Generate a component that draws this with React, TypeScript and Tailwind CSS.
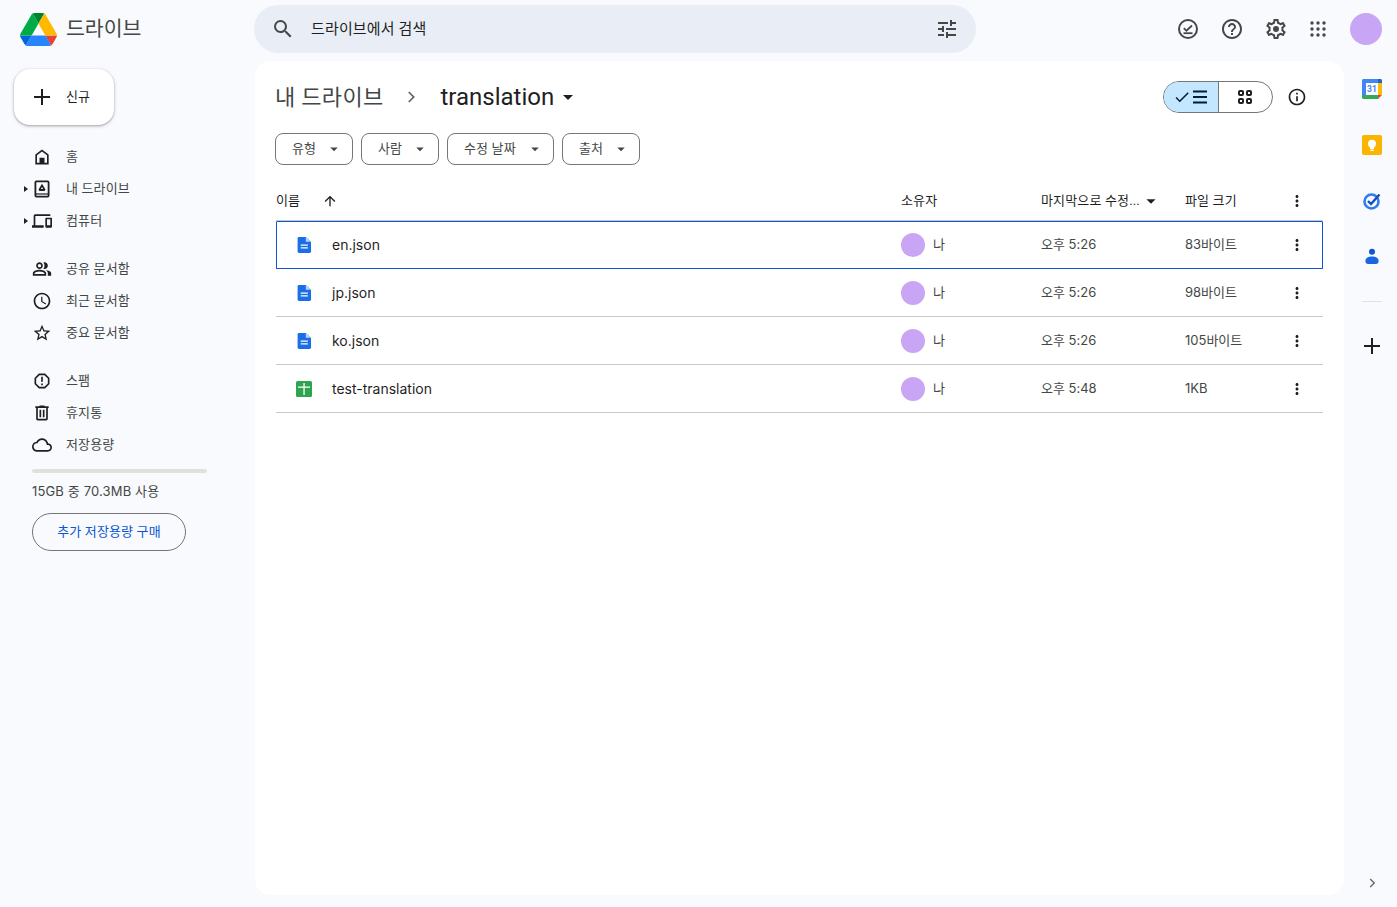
import type { ReactNode } from "react";

const FONT = "font-['Roboto','Noto_Sans_CJK_KR',sans-serif]";

function Icon({ d, size = 24, className = "", children }: { d?: string; size?: number; className?: string; children?: ReactNode }) {
  return (
    <svg width={size} height={size} viewBox="0 0 24 24" fill="currentColor" className={`shrink-0 ${className}`}>
      {d && <path d={d} />}
      {children}
    </svg>
  );
}

const PATHS = {
  search: "M15.5 14h-.79l-.28-.27A6.471 6.471 0 0 0 16 9.5 6.5 6.5 0 1 0 9.5 16c1.61 0 3.09-.59 4.23-1.57l.27.28v.79l5 4.99L20.49 19l-4.99-5zm-6 0C7.01 14 5 11.99 5 9.5S7.01 5 9.5 5 14 7.01 14 9.5 11.99 14 9.5 14z",
  tune: "M3 17v2h6v-2H3zM3 5v2h10V5H3zm10 16v-2h8v-2h-8v-2h-2v6h2zM7 9v2H3v2h4v2h2V9H7zm14 4v-2H11v2h10zm-6-4h2V7h4V5h-4V3h-2v6z",
  help: "M11 18h2v-2h-2v2zm1-16C6.48 2 2 6.48 2 12s4.48 10 10 10 10-4.48 10-10S17.52 2 12 2zm0 18c-4.41 0-8-3.59-8-8s3.59-8 8-8 8 3.59 8 8-3.59 8-8 8zm0-14c-2.21 0-4 1.79-4 4h2c0-1.1.9-2 2-2s2 .9 2 2c0 2-3 1.75-3 5h2c0-2.25 3-2.5 3-5 0-2.21-1.79-4-4-4z",
  settings: "M19.43 12.98c.04-.32.07-.64.07-.98 0-.34-.03-.66-.07-.98l2.11-1.65c.19-.15.24-.42.12-.64l-2-3.46c-.09-.16-.26-.25-.44-.25-.06 0-.12.01-.17.03l-2.49 1c-.52-.4-1.08-.73-1.69-.98l-.38-2.65C14.46 2.18 14.25 2 14 2h-4c-.25 0-.46.18-.49.42l-.38 2.65c-.61.25-1.17.59-1.69.98l-2.49-1c-.06-.02-.12-.03-.18-.03-.17 0-.34.09-.43.25l-2 3.46c-.13.22-.07.49.12.64l2.11 1.65c-.04.32-.07.65-.07.98 0 .33.03.66.07.98l-2.11 1.65c-.19.15-.24.42-.12.64l2 3.46c.09.16.26.25.44.25.06 0 .12-.01.17-.03l2.49-1c.52.4 1.08.73 1.69.98l.38 2.65c.03.24.24.42.49.42h4c.25 0 .46-.18.49-.42l.38-2.65c.61-.25 1.17-.59 1.69-.98l2.49 1c.06.02.12.03.18.03.17 0 .34-.09.43-.25l2-3.46c.12-.22.07-.49-.12-.64l-2.11-1.65zm-1.98-1.71c.04.31.05.52.05.73 0 .21-.02.43-.05.73l-.14 1.13.89.7 1.08.84-.7 1.21-1.27-.51-1.04-.42-.9.68c-.43.32-.84.56-1.25.73l-1.06.43-.16 1.13-.2 1.35h-1.4l-.19-1.35-.16-1.13-1.06-.43c-.43-.18-.83-.41-1.23-.71l-.91-.7-1.06.43-1.27.51-.7-1.21 1.08-.84.89-.7-.14-1.13c-.03-.31-.05-.54-.05-.74s.02-.43.05-.73l.14-1.13-.89-.7-1.08-.84.7-1.21 1.27.51 1.04.42.9-.68c.43-.32.84-.56 1.25-.73l1.06-.43.16-1.13.2-1.35h1.39l.19 1.35.16 1.13 1.06.43c.43.18.83.41 1.23.71l.91.7 1.06-.43 1.27-.51.7 1.21-1.07.85-.89.7.14 1.13zM12 9a3 3 0 1 0 0 6 3 3 0 0 0 0-6z",
  plus: "M20 13h-7v7h-2v-7H4v-2h7V4h2v7h7v2z",
  home: "M12 3L4 9v12h16V9l-8-6zm6 16h-3v-6H9v6H6v-9l6-4.5 6 4.5v9z",
  devices: "M4 6h18V4H4c-1.1 0-2 .9-2 2v11H0v3h14v-3H4V6zm19 2h-6c-.55 0-1 .45-1 1v10c0 .55.45 1 1 1h6c.55 0 1-.45 1-1V9c0-.55-.45-1-1-1zm-1 9h-4v-7h4v7z",
  people: "M16.67 13.13C18.04 14.06 19 15.32 19 17v3h4v-3c0-2.18-3.57-3.47-6.33-3.87zM15 12c2.21 0 4-1.79 4-4s-1.79-4-4-4c-.47 0-.91.1-1.33.24C14.5 5.27 15 6.58 15 8s-.5 2.73-1.33 3.76c.42.14.86.24 1.33.24zM9 12c2.21 0 4-1.79 4-4s-1.79-4-4-4-4 1.79-4 4 1.79 4 4 4zm0-6c1.1 0 2 .9 2 2s-.9 2-2 2-2-.9-2-2 .9-2 2-2zM9 13c-2.67 0-8 1.34-8 4v3h16v-3c0-2.66-5.33-4-8-4zm6 5H3v-.99C3.2 16.29 6.3 15 9 15s5.8 1.29 6 2v1z",
  clock: "M11.99 2C6.47 2 2 6.48 2 12s4.47 10 9.99 10C17.52 22 22 17.52 22 12S17.52 2 11.99 2zM12 20c-4.42 0-8-3.58-8-8s3.58-8 8-8 8 3.58 8 8-3.58 8-8 8zm.5-13H11v6l5.25 3.15.75-1.23-4.5-2.67z",
  star: "M22 9.24l-7.19-.62L12 2 9.19 8.63 2 9.24l5.46 4.73L5.82 21 12 17.27 18.18 21l-1.63-7.03L22 9.24zM12 15.4l-3.76 2.27 1-4.28-3.32-2.88 4.38-.38L12 6.1l1.71 4.04 4.38.38-3.32 2.88 1 4.28L12 15.4z",
  spam: "M15.73 3H8.27L3 8.27v7.46L8.27 21h7.46L21 15.73V8.27L15.73 3zM19 14.9L14.9 19H9.1L5 14.9V9.1L9.1 5h5.8L19 9.1v5.8zM11 7h2v6h-2zm0 8h2v2h-2z",
  trash: "M15 4V3H9v1H4v2h1v13c0 1.1.9 2 2 2h10c1.1 0 2-.9 2-2V6h1V4h-5zm2 15H7V6h10v13zM9 8h2v9H9zm4 0h2v9h-2z",
  cloud: "M19.35 10.04C18.67 6.59 15.64 4 12 4 9.11 4 6.6 5.64 5.35 8.04 2.34 8.36 0 10.91 0 14c0 3.31 2.69 6 6 6h13c2.76 0 5-2.24 5-5 0-2.64-2.05-4.78-4.65-4.96zM19 18H6c-2.21 0-4-1.79-4-4 0-2.05 1.53-3.76 3.56-3.97l1.07-.11.5-.95C8.08 7.14 9.94 6 12 6c2.62 0 4.88 1.86 5.39 4.43l.3 1.5 1.53.11c1.56.1 2.78 1.41 2.78 2.96 0 1.65-1.35 3-3 3z",
  caret: "M7 10l5 5 5-5z",
  chevron: "M8.600 6.700l1.400-1.400 6.700 6.700-6.700 6.700-1.400-1.400 5.300-5.300z",
  info: "M11 7h2v2h-2zm0 4h2v6h-2zm1-9C6.48 2 2 6.48 2 12s4.48 10 10 10 10-4.48 10-10S17.52 2 12 2zm0 18c-4.41 0-8-3.59-8-8s3.59-8 8-8 8 3.59 8 8-3.59 8-8 8z",
  up: "M4 12l1.41 1.41L11 7.83V20h2V7.83l5.58 5.59L20 12l-8-8-8 8z",
  more: "M12 8c1.1 0 2-.9 2-2s-.9-2-2-2-2 .9-2 2 .9 2 2 2zm0 2c-1.1 0-2 .9-2 2s.9 2 2 2 2-.9 2-2-.9-2-2-2zm0 6c-1.1 0-2 .9-2 2s.9 2 2 2 2-.9 2-2-.9-2-2-2z",
  check: "M9 16.17L4.83 12l-1.42 1.41L9 19 21 7l-1.41-1.41z",
};

function DriveLogo() {
  return (
    <svg width="37" height="33" viewBox="0 0 87.3 78">
      <path d="m6.6 66.85 3.85 6.65c.8 1.4 1.95 2.5 3.3 3.3l13.75-23.8h-27.5c0 1.55.4 3.1 1.2 4.5z" fill="#0066da" />
      <path d="m43.65 25-13.75-23.8c-1.35.8-2.5 1.9-3.3 3.3l-25.4 44a9.06 9.06 0 0 0 -1.2 4.5h27.5z" fill="#00ac47" />
      <path d="m73.55 76.8c1.35-.8 2.5-1.9 3.3-3.3l1.6-2.75 7.65-13.25c.8-1.4 1.2-2.95 1.2-4.5h-27.502l5.852 11.5z" fill="#ea4335" />
      <path d="m43.65 25 13.75-23.8c-1.35-.8-2.9-1.2-4.5-1.2h-18.5c-1.6 0-3.15.45-4.5 1.2z" fill="#00832d" />
      <path d="m59.8 53h-32.3l-13.75 23.8c1.35.8 2.9 1.2 4.5 1.2h50.8c1.6 0 3.15-.45 4.5-1.2z" fill="#2684fc" />
      <path d="m73.4 26.5-12.7-22c-.8-1.4-1.95-2.5-3.3-3.3l-13.75 23.8 16.15 28h27.45c0-1.55-.4-3.1-1.2-4.5z" fill="#ffba00" />
    </svg>
  );
}

function MyDriveIcon() {
  return (
    <svg width="24" height="24" viewBox="0 0 24 24" fill="none" className="shrink-0">
      <rect x="5.400" y="4.400" width="13.200" height="15.200" rx="1" stroke="currentColor" strokeWidth="1.800" />
      <path d="M5.500 17h13" stroke="currentColor" strokeWidth="1.200" />
      <path d="M12 6.800l3.500 5.800-.9 1.400H9.400l-.9-1.400z" fill="currentColor" />
      <path d="M12 10l-1.100 2h2.200z" fill="#f8fafd" />
    </svg>
  );
}

function OfflineIcon() {
  return (
    <svg width="24" height="24" viewBox="0 0 24 24" fill="none" className="shrink-0">
      <circle cx="12" cy="12" r="9" stroke="#444746" strokeWidth="2" />
      <path d="M7.800 11.200l2.600 2.500 5.600-5.200" stroke="#444746" strokeWidth="1.800" />
      <path d="M7.500 16.200h9" stroke="#444746" strokeWidth="1.800" />
    </svg>
  );
}

function AppsIcon() {
  const dots = [6, 12, 18];
  return (
    <svg width="24" height="24" viewBox="0 0 24 24" fill="#444746" className="shrink-0">
      {dots.map((y) => dots.map((x) => <circle key={`${x}-${y}`} cx={x} cy={y} r="1.700" />))}
    </svg>
  );
}

function ListIcon() {
  return (
    <svg width="18" height="18" viewBox="0 0 18 18" fill="currentColor" className="shrink-0">
      <path d="M2 2.600h14v2H2zM2 8h14v2H2zM2 13.400h14v2H2z" />
    </svg>
  );
}

function GridIcon() {
  return (
    <svg width="18" height="18" viewBox="0 0 18 18" fill="none" stroke="#1f1f1f" strokeWidth="2">
      <rect x="3" y="3" width="4" height="4" rx="1" />
      <rect x="11" y="3" width="4" height="4" rx="1" />
      <rect x="3" y="11" width="4" height="4" rx="1" />
      <rect x="11" y="11" width="4" height="4" rx="1" />
    </svg>
  );
}

function DocIcon() {
  return (
    <svg width="16" height="16" viewBox="0 0 16 16">
      <path d="M3 0h6.800L15 4.800v9.800c0 .8-.6 1.400-1.400 1.400H3c-.8 0-1.400-.6-1.400-1.400V1.400C1.600.6 2.200 0 3 0z" fill="#1a6fe8" />
      <path d="M9.800 0L15 4.800H9.800z" fill="#bcd4fa" />
      <path d="M4.700 7.600h7.200v1.200H4.700zM4.700 10.300h7.200v1.200H4.700z" fill="#fff" />
    </svg>
  );
}

function SheetIcon() {
  return (
    <svg width="16" height="16" viewBox="0 0 16 16">
      <rect width="16" height="16" rx="1.500" fill="#2fa350" />
      <path d="M7.400 2h1.300v3.500H14v1.300H8.700V14H7.400V6.800H2V5.500h5.400z" fill="#fff" />
    </svg>
  );
}

function CalendarIcon() {
  return (
    <svg width="20" height="20" viewBox="0 0 20 20">
      <path d="M1.500 0h14.500v4H4v12H0V1.500C0 .7.700 0 1.500 0z" fill="#4285f4" />
      <path d="M16 0h2.500c.8 0 1.500.7 1.500 1.500V4h-4z" fill="#1967d2" />
      <path d="M16 4h4v12h-4z" fill="#fbbc04" />
      <path d="M0 16h16v4H1.500C.7 20 0 19.300 0 18.500z" fill="#34a853" />
      <path d="M16 16h4l-4 4z" fill="#ea4335" />
      <rect x="4" y="4" width="12" height="12" fill="#fff" />
      <text x="10" y="13.300" textAnchor="middle" fontSize="8.500" fontWeight="700" fill="#4285f4" fontFamily="Roboto, sans-serif">31</text>
    </svg>
  );
}

function KeepIcon() {
  return (
    <svg width="20" height="20" viewBox="0 0 20 20">
      <rect width="20" height="20" rx="2" fill="#fbb400" />
      <circle cx="10" cy="8.800" r="4" fill="#fff" />
      <rect x="8" y="12" width="4" height="2" fill="#fff" />
      <rect x="8.300" y="14.600" width="3.400" height="1.300" fill="#fff" />
    </svg>
  );
}

function TasksIcon() {
  return (
    <svg width="20" height="20" viewBox="0 0 20 20" fill="none">
      <circle cx="9.500" cy="10.500" r="7" stroke="#2f7bf0" strokeWidth="2.600" />
      <path d="M6 10l3 3 8.500-9.500" stroke="#0f4fc4" strokeWidth="2.400" />
    </svg>
  );
}

function ContactsIcon() {
  return (
    <svg width="20" height="20" viewBox="0 0 20 20">
      <circle cx="10" cy="4.800" r="3" fill="#0b57d0" />
      <path d="M3.500 13.500C3.500 11 6.500 9.500 10 9.500s6.500 1.500 6.500 4v1c0 1.500-1 2.500-2.500 2.500H6c-1.500 0-2.500-1-2.500-2.500z" fill="#1a66e0" />
    </svg>
  );
}

function NavItem({ icon, label, arrow }: { icon: ReactNode; label: string; arrow?: boolean }) {
  return (
    <div className="flex h-8 items-center pl-[30px] text-[#1f1f1f]">
      <div className="flex w-6 justify-center">{icon}</div>
      {arrow && <div className="-ml-[30px] mr-[26px] h-0 w-0 border-y-[3.500px] border-l-[4px] border-y-transparent border-l-[#1f1f1f]" />}
      <span className="ml-3 text-[13px] leading-5 text-[#444746]">{label}</span>
    </div>
  );
}

function Sidebar() {
  return (
    <aside className="w-[255px] shrink-0 pt-2">
      <div className="ml-[14px] flex h-14 w-[100px] items-center rounded-2xl bg-white pl-4 shadow-[0_1px_2px_rgba(60,64,67,0.3),0_1px_3px_1px_rgba(60,64,67,0.15)]">
        <Icon d={PATHS.plus} className="text-[#1f1f1f]" />
        <span className="ml-3 text-[13px] text-[#1f1f1f]">신규</span>
      </div>
      <nav className="mt-4 flex flex-col gap-4">
        <div>
          <NavItem icon={<Icon d={PATHS.home} size={20}><rect x="10" y="14" width="4" height="6" /></Icon>} label="홈" />
          <NavItem icon={<MyDriveIcon />} label="내 드라이브" arrow />
          <NavItem icon={<Icon d={PATHS.devices} size={20} />} label="컴퓨터" arrow />
        </div>
        <div>
          <NavItem icon={<Icon d={PATHS.people} size={20} />} label="공유 문서함" />
          <NavItem icon={<Icon d={PATHS.clock} size={20} />} label="최근 문서함" />
          <NavItem icon={<Icon d={PATHS.star} size={20} />} label="중요 문서함" />
        </div>
        <div>
          <NavItem icon={<Icon d={PATHS.spam} size={20} />} label="스팸" />
          <NavItem icon={<Icon d={PATHS.trash} size={20} />} label="휴지통" />
          <NavItem icon={<Icon d={PATHS.cloud} size={20} />} label="저장용량" />
        </div>
      </nav>
      <div className="ml-8 mt-2">
        <div className="h-1 w-[175px] rounded-full bg-[#dfe1dd]" />
        <p className="mt-2 font-['Inter','Noto_Sans_CJK_KR',sans-serif] text-[13px] leading-5 tracking-[0.15px] text-[#444746]">15GB 중 70.3MB 사용</p>
        <button className="mt-3 h-[38px] w-[154px] rounded-full border border-[#747775] text-[13px] text-[#0b57d0]">
          추가 저장용량 구매
        </button>
      </div>
    </aside>
  );
}

function Chip({ label, width }: { label: string; width: string }) {
  return (
    <div className={`flex h-8 items-center justify-between rounded-lg border border-[#747775] pl-4 pr-[9px] text-[13px] text-[#444746] ${width}`}>
      <span>{label}</span>
      <Icon d={PATHS.caret} size={18} className="text-[#444746]" />
    </div>
  );
}

const FILES = [
  { name: "en.json", time: "오후 5:26", size: "83바이트", selected: true },
  { name: "jp.json", time: "오후 5:26", size: "98바이트" },
  { name: "ko.json", time: "오후 5:26", size: "105바이트" },
  { name: "test-translation", time: "오후 5:48", size: "1KB", sheet: true },
];

const COLS = "grid grid-cols-[625px_140px_144px_103px_1fr] items-center";
const META = "font-['Inter','Noto_Sans_CJK_KR',sans-serif] text-[13px] tracking-normal text-[#444746]";

function FileRow({ file }: { file: (typeof FILES)[number] }) {
  return (
    <div
      className={`${COLS} h-12 border-b ${
        file.selected ? "rounded-[1px] border-[#0b57d0] outline-1 -outline-offset-1 outline-[#0b57d0]" : "border-[#c7c7c7]"
      }`}
    >
      <div className="flex items-center">
        <div className="ml-5 flex w-4 justify-center">{file.sheet ? <SheetIcon /> : <DocIcon />}</div>
        <span className="ml-5 font-['Inter',sans-serif] text-[14px] tracking-normal text-[#1f1f1f]">{file.name}</span>
      </div>
      <div className="flex items-center gap-2">
        <div className="size-6 rounded-full bg-[#c9a5f5]" />
        <span className="text-[13px] text-[#444746]">나</span>
      </div>
      <span className={META}>{file.time}</span>
      <span className={META}>{file.size}</span>
      <Icon d={PATHS.more} size={18} className="text-[#1f1f1f]" />
    </div>
  );
}

function FilePanel() {
  return (
    <main className="flex-1 rounded-2xl bg-white px-5">
      <div className="flex h-[72px] items-center">
        <span className="text-[22px] tracking-[0.3px] text-[#444746]">내 드라이브</span>
        <Icon d={PATHS.chevron} size={20} className="ml-[18px] text-[#5f6368]" />
        <span className="ml-[19px] text-2xl tracking-normal text-[#1f1f1f]">translation</span>
        <Icon d={PATHS.caret} className="ml-[2px] text-[#1f1f1f]" />
        <div className="ml-auto flex h-8 w-[110px] overflow-hidden rounded-full border border-[#747775]">
          <div className="flex w-[55px] items-center justify-center border-r border-[#747775] bg-[#c2e7ff] text-[#001d35]">
            <Icon d={PATHS.check} size={18} />
            <ListIcon />
          </div>
          <div className="flex flex-1 items-center justify-center pr-px">
            <GridIcon />
          </div>
        </div>
        <Icon d={PATHS.info} size={20} className="ml-[14px] mr-[17px] text-[#1f1f1f]" />
      </div>
      <div className="flex gap-2">
        <Chip label="유형" width="w-[78px]" />
        <Chip label="사람" width="w-[78px]" />
        <Chip label="수정 날짜" width="w-[107px]" />
        <Chip label="출처" width="w-[78px]" />
      </div>
      <div className="ml-px mr-px mt-4">
        <div className={`${COLS} h-10 border-b border-[#c7c7c7] text-[13px] text-[#1f1f1f]`}>
          <div className="flex items-center">
            <span>이름</span>
            <Icon d={PATHS.up} size={16} className="ml-[22px]" />
          </div>
          <span>소유자</span>
          <div className="flex items-center">
            <span>마지막으로 수정...</span>
            <Icon d={PATHS.caret} size={22} />
          </div>
          <span>파일 크기</span>
          <Icon d={PATHS.more} size={18} />
        </div>
        {FILES.map((file) => (
          <FileRow key={file.name} file={file} />
        ))}
      </div>
    </main>
  );
}

function RightRail() {
  return (
    <aside className="flex w-[53px] shrink-0 flex-col items-center pl-[3px] pt-[18px]">
      <div className="flex flex-col items-center gap-9">
        <CalendarIcon />
        <KeepIcon />
        <TasksIcon />
        <ContactsIcon />
      </div>
      <div className="mt-[34px] h-px w-5 bg-[#e1e3e1]" />
      <Icon d={PATHS.plus} className="mt-8 text-[#1f1f1f]" />
      <Icon d={PATHS.chevron} size={16} className="mt-auto mb-1 text-[#5f6368]" />
    </aside>
  );
}

export default function App() {
  return (
    <div className={`flex h-[907px] flex-col overflow-hidden bg-[#f8fafd] tracking-[0.15px] ${FONT}`}>
      <header className="flex h-[61px] shrink-0 items-center pb-[3px]">
        <div className="flex w-[254px] shrink-0 items-center pl-5">
          <DriveLogo />
          <span className="ml-[9px] text-[20.500px] tracking-normal text-[#444746]">드라이브</span>
        </div>
        <div className="flex h-12 w-[722px] items-center rounded-3xl bg-[#e9eef6] pl-[17px] pr-[9px]">
          <Icon d={PATHS.search} className="text-[#444746]" />
          <span className="ml-[16px] text-[15px] text-[#1f1f1f]">드라이브에서 검색</span>
          <Icon d={PATHS.tune} className="ml-auto mr-[8px] text-[#444746]" />
        </div>
        <div className="ml-auto flex items-center pr-[15px]">
          <OfflineIcon />
          <Icon d={PATHS.help} className="ml-5 text-[#444746]" />
          <Icon d={PATHS.settings} className="ml-5 text-[#444746]" />
          <div className="ml-[18px]"><AppsIcon /></div>
          <div className="ml-5 size-8 rounded-full bg-[#c9a5f5]" />
        </div>
      </header>
      <div className="flex min-h-0 flex-1 pb-3">
        <Sidebar />
        <FilePanel />
        <RightRail />
      </div>
    </div>
  );
}
